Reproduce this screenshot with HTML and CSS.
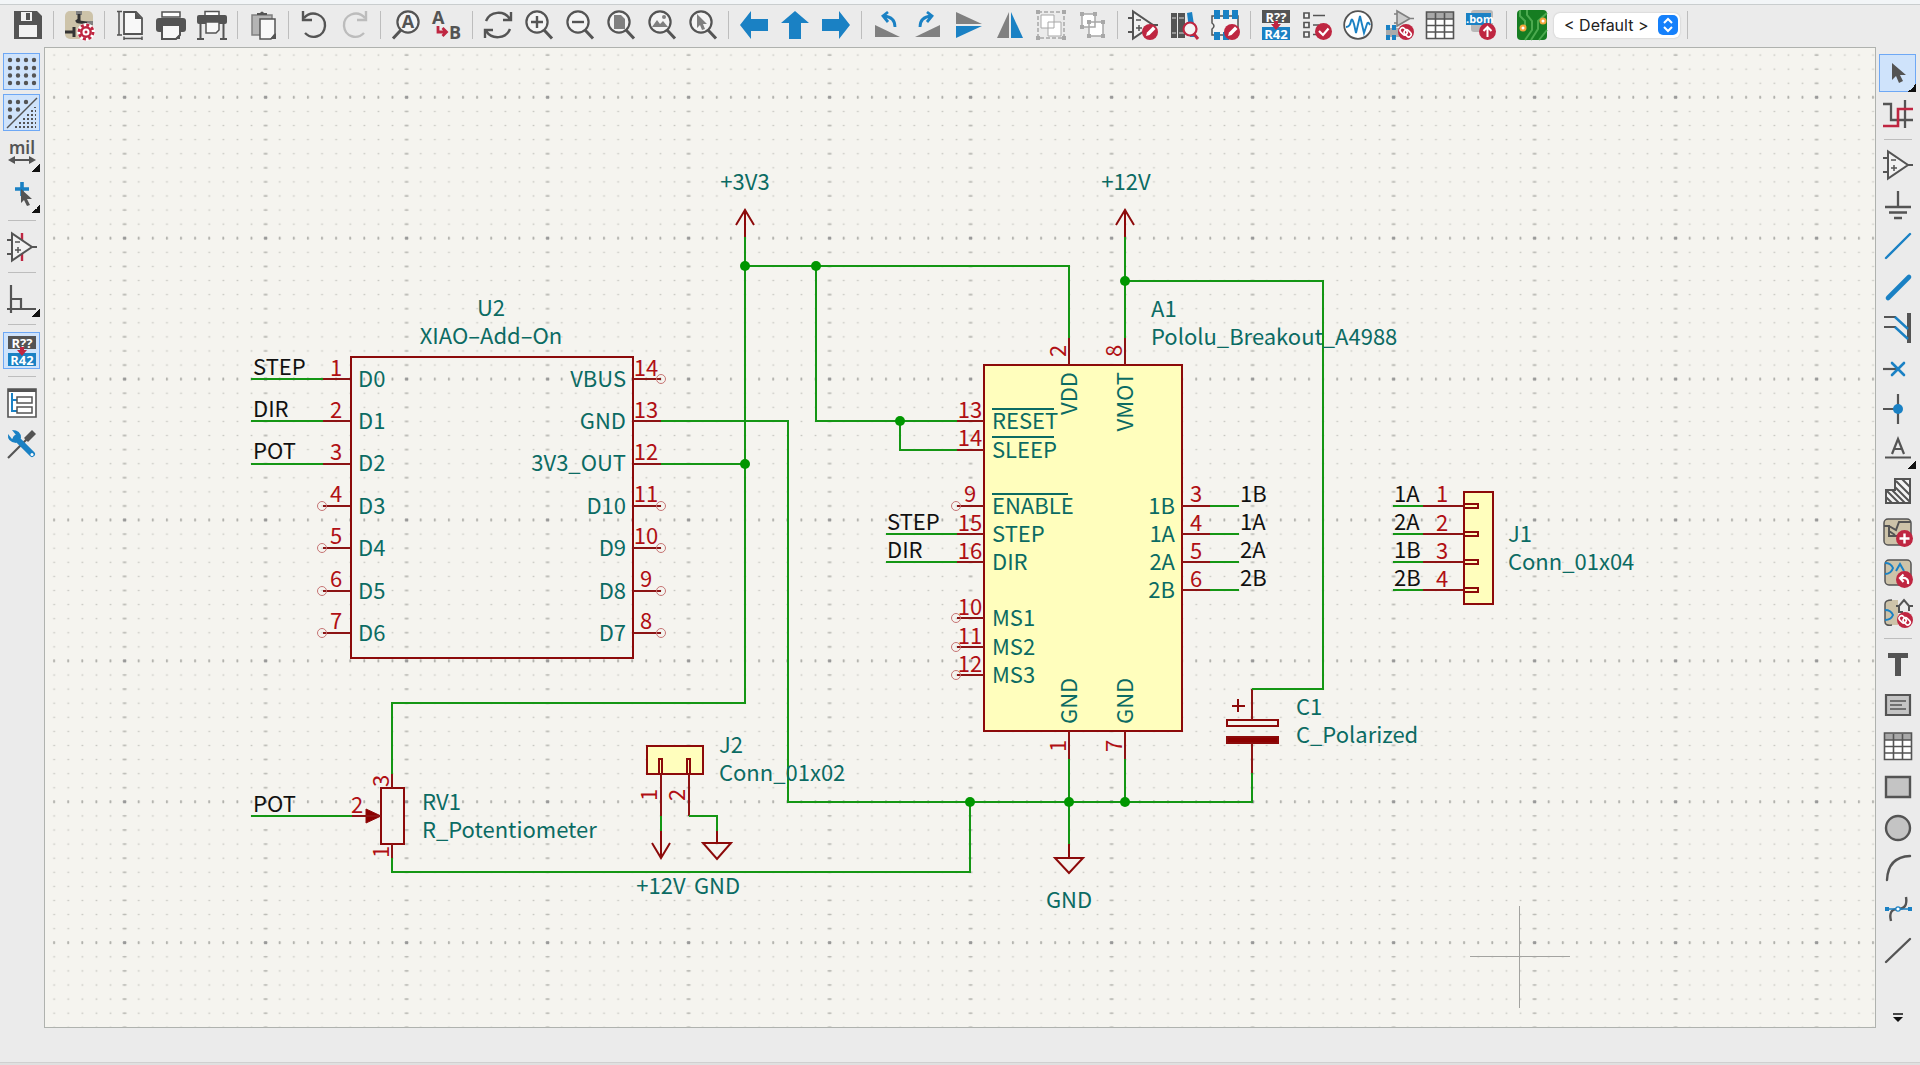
FILE: index.html
```html
<!DOCTYPE html>
<html lang="en">
<head>
<meta charset="utf-8">
<title>Schematic Editor</title>
<link rel="stylesheet" href="styles.css">
</head>
<body>
<svg class="defs" aria-hidden="true">
  <defs>
    <symbol id="lens" viewBox="0 0 30 30"><circle cx="13" cy="12" r="10.6" fill="#f4f4f4" stroke="#545454" stroke-width="2.2"/><path d="M20 20l8 8.500" stroke="#545454" stroke-width="3"/></symbol>
    <symbol id="annotate" viewBox="0 0 30 30"><path fill="#545454" d="M1 0h28v13H1z"/><path fill="#1a81c4" d="M1 17h28v13H1z"/><text x="15" y="12" class="it" text-anchor="middle">R??</text><text x="15" y="29" class="it" text-anchor="middle">R42</text><path fill="#bf2641" d="M13 11h4v3h3l-5 6-5-6h3z"/></symbol>
    <symbol id="amp" viewBox="0 0 30 30"><path d="M5 1.500v27L25 15zM0 8h5M0 22h5M25 15h5" fill="#f2f2f2" stroke="#545454" stroke-width="2"/><path d="M8 10h5M8 18h6M11 15v6" stroke="#545454" stroke-width="1.500"/></symbol>
    <symbol id="pencil" viewBox="0 0 30 30"><circle cx="22" cy="22" r="8" fill="#bf2641"/><path d="M18 26l1-3.500 6-6 2.500 2.500-6 6z" fill="#fff"/></symbol>
    <symbol id="link" viewBox="0 0 30 30"><circle cx="22" cy="22" r="8" fill="#bf2641"/><g fill="none" stroke="#fff" stroke-width="1.600"><rect x="16" y="19" width="8" height="5" rx="2.500" transform="rotate(45 20 21)"/><rect x="20" y="21" width="8" height="5" rx="2.500" transform="rotate(45 24 23)"/></g></symbol>
    <symbol id="table" viewBox="0 0 30 30"><path d="M1 2h28v27H1z" fill="#fff"/><path d="M1 2h28v7H1z" fill="#a8a8a8"/><path d="M1.500 2h27v26.500h-27zM1 9h28M1 15.500h28M1 22h28M10.500 3v26M19.500 3v26" fill="none" stroke="#545454" stroke-width="1.600"/></symbol>
  </defs>
</svg>

<div class="app">
  <div class="titlebar"></div>
  <header class="toolbar" role="toolbar" aria-label="Main toolbar">
    <button aria-label="Save"><svg viewBox="0 0 30 30"><path fill="#545454" d="M1 1h23l5 5v23H1z"/><path fill="#f2f2f2" d="M8 2h11v9H8zM6 15h18v12H6z"/><path fill="#545454" d="M13 3h4v7h-4z"/></svg></button>
    <hr>
    <button aria-label="Schematic setup"><svg viewBox="0 0 30 30"><rect x="1" y="1" width="28" height="28" rx="5" fill="#cdc3a9"/><path fill="#808080" d="M12 1h6v4h-6zM23 11h6v4h-6z"/><path d="M15 4v8l8 1M1 22h9M10 17v10M12 12l4-3" fill="none" stroke="#333" stroke-width="3"/><circle cx="22" cy="22" r="9" fill="#fff"/><circle cx="22" cy="22" r="7" fill="none" stroke="#bf2641" stroke-width="3" stroke-dasharray="3 2.500"/><circle cx="22" cy="22" r="4.700" fill="#fff" stroke="#bf2641" stroke-width="2.400"/><circle cx="22" cy="22" r="1.500" fill="#bf2641"/></svg></button>
    <hr>
    <button aria-label="Page settings"><svg viewBox="0 0 30 30"><path d="M9 2h12l6 6v16H9z" fill="#f8f8f8" stroke="#545454" stroke-width="1.800"/><path d="M20 2v7h7z" fill="#545454"/><path d="M4 2v23M2 1.500h5M2 25h5M9 28.500h18M9 26.500v3.500M27 26.500v3.500" stroke="#545454" stroke-width="1.500"/></svg></button>
    <button aria-label="Print"><svg viewBox="0 0 30 30"><path d="M6 2h18v5H6z" fill="#fff" stroke="#545454" stroke-width="1.500"/><rect y="8" width="30" height="14" rx="3" fill="#545454"/><path d="M6 15h18v10l-4 4H6z" fill="#f8f8f8" stroke="#545454" stroke-width="2"/><path d="M24 24v5h-5z" fill="#545454"/></svg></button>
    <button aria-label="Plot"><svg viewBox="0 0 30 30"><path d="M8 1.500h14V6H8z" fill="#fff" stroke="#545454" stroke-width="1.500"/><rect y="5" width="30" height="9" rx="2" fill="#545454"/><path d="M9 12h13v8l-3 3H9z" fill="#f8f8f8" stroke="#545454" stroke-width="1.500"/><path d="M3.500 14v15M26.500 14v15M0 29h7M23 29h7" stroke="#545454" stroke-width="2"/></svg></button>
    <hr>
    <button aria-label="Paste"><svg viewBox="0 0 30 30"><path d="M4 5h20v20H4z" fill="#b4b4b4" stroke="#808080" stroke-width="1.500"/><path d="M9 5V3h3q2-3 4 0h3v2z" fill="#545454"/><path d="M12 9h15v15l-4 5H12z" fill="#f8f8f8" stroke="#545454" stroke-width="1.500"/><path d="M28 23v6h-6z" fill="#545454"/></svg></button>
    <hr>
    <button aria-label="Undo"><svg viewBox="0 0 30 30"><path d="M5 8C13-1 27 5 26 16c-1 11-13 14-20 7M4 1v9h9" fill="none" stroke="#545454" stroke-width="2.400"/></svg></button>
    <button aria-label="Redo" disabled><svg viewBox="0 0 30 30"><path d="M25 8C17-1 3 5 4 16c1 11 13 14 20 7M26 1v9h-9" fill="none" stroke="#bcbcbc" stroke-width="2.400"/></svg></button>
    <hr>
    <button aria-label="Find"><svg viewBox="0 0 30 30"><g transform="matrix(-1 0 0 1 30 0)"><use href="#lens"/></g><text x="17" y="18" class="it dark" text-anchor="middle">A</text></svg></button>
    <button aria-label="Find and replace"><svg viewBox="0 0 30 30"><text x="0" y="14" class="it dark">A</text><text x="17" y="29" class="it dark">B</text><path d="M6 16v6h8M10.500 18l4 4-4 4" fill="none" stroke="#bf2641" stroke-width="2.800"/></svg></button>
    <hr>
    <button aria-label="Refresh"><svg viewBox="0 0 30 30"><path d="M3 11C7 1 21 0 27 9M28 2v8h-8M27 19c-4 10-18 11-24 2M2 28v-8h8" fill="none" stroke="#545454" stroke-width="2.400"/></svg></button>
    <button aria-label="Zoom in"><svg viewBox="0 0 30 30"><use href="#lens"/><path d="M7 12h12M13 6v12" stroke="#545454" stroke-width="2.400"/></svg></button>
    <button aria-label="Zoom out"><svg viewBox="0 0 30 30"><use href="#lens"/><path d="M7 12h12" stroke="#545454" stroke-width="2.400"/></svg></button>
    <button aria-label="Zoom to page"><svg viewBox="0 0 30 30"><use href="#lens"/><path d="M8 5h7l4 4v10H8z" fill="#808080"/></svg></button>
    <button aria-label="Zoom to objects"><svg viewBox="0 0 30 30"><use href="#lens"/><path d="M5 17l5-7 3 4 3-3 5 6z" fill="#808080"/><circle cx="17" cy="7" r="2" fill="#808080"/></svg></button>
    <button aria-label="Zoom to selection"><svg viewBox="0 0 30 30"><use href="#lens"/><path d="M9 4v14l3-3 2 5 3-1-2-5h4z" fill="#808080"/></svg></button>
    <hr>
    <button aria-label="Back"><svg viewBox="0 0 30 30"><path d="M1 15L12 1v8h17v12H12v8z" fill="#1a81c4"/></svg></button>
    <button aria-label="Up"><svg viewBox="0 0 30 30"><path d="M15 1l14 12h-8v16H9V13H1z" fill="#1a81c4"/></svg></button>
    <button aria-label="Forward"><svg viewBox="0 0 30 30"><path d="M29 15L18 1v8H1v12h17v8z" fill="#1a81c4"/></svg></button>
    <hr>
    <button aria-label="Rotate left"><svg viewBox="0 0 30 30"><path d="M3 15v12h25z" fill="#808080"/><path d="M23 17q0-10-11-11M16 2l-5 4 5 6" fill="none" stroke="#1a81c4" stroke-width="2.800"/></svg></button>
    <button aria-label="Rotate right"><svg viewBox="0 0 30 30"><path d="M27 15v12H2z" fill="#808080"/><path d="M7 17Q7 7 18 6M14 2l5 4-5 6" fill="none" stroke="#1a81c4" stroke-width="2.800"/></svg></button>
    <button aria-label="Mirror vertically"><svg viewBox="0 0 30 30"><path d="M2 2v12h26z" fill="#808080"/><path d="M2 28V16h26z" fill="#1a81c4"/></svg></button>
    <button aria-label="Mirror horizontally"><svg viewBox="0 0 30 30"><path d="M2 28h12V2z" fill="#808080"/><path d="M28 28H16V2z" fill="#1a81c4"/></svg></button>
    <button aria-label="Group" disabled><svg viewBox="0 0 30 30"><path d="M2 2h26v26H2z" fill="none" stroke="#a8a8a8" stroke-dasharray="4 2" stroke-width="1.500"/><path d="M5 5h13v13H5zM12 12h13v14H12z" fill="#fff" stroke="#a8a8a8"/><path d="M0 0h4v4H0zM26 0h4v4h-4zM0 26h4v4H0zM26 26h4v4h-4z" fill="#a8a8a8"/></svg></button>
    <button aria-label="Ungroup" disabled><svg viewBox="0 0 30 30"><path d="M5 4h13v13H5zM12 12h14v14H12z" fill="#fff" stroke="#a8a8a8" stroke-width="1.500"/><path d="M3 2h4v4H3zM16 2h4v4h-4zM3 15h4v4H3zM10 10h4v4h-4zM24 10h4v4h-4zM10 24h4v4h-4zM24 24h4v4h-4z" fill="#a8a8a8"/></svg></button>
    <hr>
    <button aria-label="Symbol editor"><svg viewBox="0 0 30 30"><use href="#amp"/><use href="#pencil"/></svg></button>
    <button aria-label="Browse libraries"><svg viewBox="0 0 30 30"><path d="M2 3h6v25H2zM9 3h7v25H9z" fill="#545454"/><path d="M3 8h4M3 23h4M10 8h5M10 23h5" stroke="#aaa" stroke-width="1.500"/><path d="M18 3l5-1 4 25h-6z" fill="#1a81c4"/><circle cx="21" cy="19" r="6.500" fill="#f4f4f4" stroke="#bf2641" stroke-width="2.200"/><path d="M25 24l4 5" stroke="#bf2641" stroke-width="3"/></svg></button>
    <button aria-label="Footprint editor"><svg viewBox="0 0 30 30"><path d="M2 6h26v19H2v-6q4-3 0-6z" fill="#f2f2f2" stroke="#545454" stroke-width="1.500"/><path d="M4 0h6v9H4zM13 0h6v9h-6zM22 0h6v9h-6zM4 22h6v8H4zM13 22h6v8h-6z" fill="#1a81c4"/><use href="#pencil"/></svg></button>
    <hr>
    <button aria-label="Annotate"><svg viewBox="0 0 30 30"><use href="#annotate"/></svg></button>
    <button aria-label="Electrical rules check"><svg viewBox="0 0 30 30"><path d="M2 3h5v5H2zM2 12.500h5v5H2zM2 22h5v5H2z" fill="#f4f4f4" stroke="#545454" stroke-width="1.700"/><path d="M11 5.500h12M11 15h6M11 24.500h4" stroke="#545454" stroke-width="1.700"/><circle cx="21.500" cy="21.500" r="8.500" fill="#bf2641"/><path d="M17 21l4 4 5.500-6.500" fill="none" stroke="#fff" stroke-width="2.200"/></svg></button>
    <button aria-label="Simulator"><svg viewBox="0 0 30 30"><circle cx="15" cy="15" r="13.800" fill="#fff" stroke="#545454" stroke-width="1.800"/><path d="M3 17q4 0 5-6 1-4 3 3l2 9 4-17 4 17 3-9q1-3 3 1" fill="none" stroke="#1a81c4" stroke-width="1.900"/></svg></button>
    <button aria-label="Assign footprints"><svg viewBox="0 0 30 30"><path d="M13 1v15l13-7.500zM10 4h3M10 13h3M25 8.500h5" fill="#ccc" stroke="#808080" stroke-width="1.600"/><path d="M2 18h16v9H2z" fill="#ababab"/><path d="M2 15h4v5H2zM8 15h4v5H8zM2 25h4v5H2zM8 25h4v5H8z" fill="#1a81c4"/><use href="#link"/></svg></button>
    <button aria-label="Symbol fields table"><svg viewBox="0 0 30 30"><use href="#table"/></svg></button>
    <button aria-label="Generate bill of materials"><svg viewBox="0 0 30 30"><rect x="5" y="0" width="22" height="22" rx="3" fill="#b8b8b8"/><path d="M0 3h25v12H0z" fill="#1a81c4"/><text x="0" y="13" class="it bom">.bom</text><circle cx="21.500" cy="21.500" r="8.500" fill="#bf2641"/><path d="M21.500 27V17M17.500 21l4-4 4 4" fill="none" stroke="#fff" stroke-width="2"/></svg></button>
    <hr>
    <button aria-label="Open PCB editor"><svg viewBox="0 0 30 30"><rect x="0" y="0" width="30" height="30" rx="4" fill="#167d22"/><path d="M3 0v6l5 5v7M10 0v5l5 6v9l-7 10M30 3l-9 8v8l-7 11M30 20l-8 10" fill="none" stroke="#4caa4f" stroke-width="2"/><circle cx="6" cy="18" r="3.500" fill="#f3a43b"/><circle cx="26" cy="11" r="3.500" fill="#f3a43b"/><circle cx="6" cy="18" r="1.500" fill="#fff"/><circle cx="26" cy="11" r="1.500" fill="#fff"/></svg></button>
    <label class="variant"><select aria-label="Design variant"><option>&lt; Default &gt;</option></select><span class="stepper"><svg viewBox="0 0 20 20"><path d="M6 8l4-4 4 4M6 12l4 4 4-4" fill="none" stroke="#fff" stroke-width="2"/></svg></span></label>
    <hr>
  </header>

  <main class="workspace">
    <nav class="side left" aria-label="Display options">
      <button class="on" aria-label="Show grid"><svg viewBox="0 0 30 30"><path d="M3 3h26M3 11h26M3 18.500h26M3 26h26" stroke="#545454" stroke-width="4.400" stroke-linecap="round" stroke-dasharray="0 8"/></svg></button>
      <button class="on" aria-label="Grid overrides"><svg viewBox="0 0 30 30"><path d="M0 30L30 0" stroke="#545454" stroke-width="1.500"/><path d="M3 4h17M3 11.500h9M3 19h1" stroke="#545454" stroke-width="4.400" stroke-linecap="round" stroke-dasharray="0 8"/><path d="M28 9v1M24 13h5M20 17h9M16 21h13M12 25h17M8 29h21" stroke="#545454" stroke-width="2" stroke-dasharray="2 2"/></svg></button>
      <button class="more" aria-label="Units"><svg viewBox="0 0 30 30"><text x="15" y="15" class="unit" text-anchor="middle">mil</text><path d="M4 21h22" stroke="#545454" stroke-width="2"/><path d="M1 21l7-4v8zM29 21l-7-4v8z" fill="#545454"/></svg></button>
      <button class="more" aria-label="Crosshair"><svg viewBox="0 0 30 30"><path d="M15 2v14M8 9h14" stroke="#1a81c4" stroke-width="3.600"/><path d="M14 9v14l3-3 3 6 3-1-3-6h5z" fill="#545454"/></svg></button>
      <hr>
      <button aria-label="Hidden pins"><svg viewBox="0 0 30 30"><path d="M15 1v28" stroke="#bf2641" stroke-width="2.400"/><use href="#amp"/></svg></button>
      <hr>
      <button class="more" aria-label="Line mode"><svg viewBox="0 0 30 30"><path d="M4 1v28M0 25h29M4 15h10v10" fill="none" stroke="#545454" stroke-width="2.200"/></svg></button>
      <hr>
      <button class="on" aria-label="Annotate automatically"><svg viewBox="0 0 30 30"><use href="#annotate"/></svg></button>
      <hr>
      <button aria-label="Hierarchy navigator"><svg viewBox="0 0 30 30"><path d="M1 1h28v28H1z" fill="#fff" stroke="#545454" stroke-width="1.600"/><path d="M1 1h28v3H1z" fill="#545454"/><path d="M5 5v18h5M5 12h5" fill="none" stroke="#1a81c4" stroke-width="2"/><path d="M10 9h15v6H10zM10 19h15v6H10z" fill="#fff" stroke="#545454" stroke-width="1.500"/></svg></button>
      <button aria-label="Properties"><svg viewBox="0 0 30 30"><path d="M1 29L20 10" stroke="#545454" stroke-width="2.200"/><path d="M17 9l8-8 4 4-8 8z" fill="#545454"/><path d="M9 9l16 16" stroke="#1a81c4" stroke-width="6" stroke-linecap="round"/><path d="M1 5q-1 8 8 9l5-5q0-8-9-8l4 5-4 4z" fill="#1a81c4"/><circle cx="25" cy="25.500" r="1.500" fill="#fff"/></svg></button>
    </nav>

    <section class="canvas" aria-label="Schematic sheet">
      <svg class="sheet">
        <defs>
          <pattern id="minor" x="117.600" y="90.300" width="14.100" height="14.090" patternUnits="userSpaceOnUse"><rect x="6.200" y="6.400" width="1.700" height="1.300" fill="#c6c6c0"/></pattern>
          <pattern id="major" x="54.100" y="26.800" width="141" height="140.900" patternUnits="userSpaceOnUse"><path d="M70.500 0v141" stroke="#b9b9b4" stroke-width="4" stroke-dasharray="1.400 12.700" stroke-dashoffset=".7"/><path d="M0 70.500h141" stroke="#b0b0ab" stroke-width="3" stroke-dasharray="1.600 12.500" stroke-dashoffset=".8"/><rect x="69" y="69" width="3" height="3" fill="#999"/></pattern>
        </defs>
        <g transform="translate(-45 -48)">
          <rect x="45" y="48" width="100%" height="100%" fill="url(#minor)"/>
          <rect x="45" y="48" width="100%" height="100%" fill="url(#major)"/>

          <g class="body">
            <rect x="984" y="365" width="198" height="366" class="fill"/>
            <rect x="1464" y="492" width="29" height="112" class="fill"/>
            <rect x="647" y="746" width="56" height="28" class="fill"/>
            <rect x="351" y="357" width="282" height="301"/>
            <rect x="381" y="788" width="23" height="56"/>
            <rect x="1227" y="720" width="51" height="6"/>
            <rect x="1227" y="737" width="51" height="6" class="solid"/>
            <path d="M1232 706h13M1238 699v13"/>
            <path d="M366 809l15 7-15 7z" class="solid thin"/>
            <path d="M1464 504h14v4h-14M1464 532h14v4h-14M1464 560h14v4h-14M1464 588h14v4h-14M659 774v-15h3v15M687 774v-15h3v15"/>
            <path d="M736 225l9-15 9 15M745 210v27M1116 225l9-15 9 15M1125 210v27M652 843l9 15 9-15M661 831v27M717 831v12M703 843h28l-14 16zM1069 844v14M1055 858h28l-14 15z"/>
          </g>
          <path class="pin" d="M323 379h27M323 421h27M323 464h27M323 506h27M323 548h27M323 591h27M323 633h27M633 379h28M633 421h28M633 464h28M633 506h28M633 548h28M633 591h28M633 633h28M957 421h27M957 450h27M957 506h27M957 534h27M957 562h27M957 618h27M957 647h27M957 675h27M1182 506h28M1182 534h28M1182 562h28M1182 590h28M1423 506h40M1423 534h40M1423 562h40M1423 590h40M1069 338v27M1125 338v27M1069 731v28M1125 731v28M1252 689v31M1252 743v30M392 774v14M392 844v14M352 816h29M661 774v42M689 774v42"/>
          <path class="wire" d="M251 379h72M251 421h72M251 464h72M745 237v466H392v71M745 266h324v72M816 266v155h141M900 421v29h57M1125 237v101M1125 281h198v408h-71M661 421h127v381h464v-29M661 464h84M886 534h71M886 562h71M1210 506h29M1210 534h29M1210 562h29M1210 590h29M1393 506h30M1393 534h30M1393 562h30M1393 590h30M1069 759v85M1125 759v43M970 802v70H392v-14M251 816h101M661 816v15M689 816h28v15"/>
          <g class="dot"><circle cx="745" cy="266" r="5"/><circle cx="816" cy="266" r="5"/><circle cx="1125" cy="281" r="5"/><circle cx="900" cy="421" r="5"/><circle cx="745" cy="464" r="5"/><circle cx="970" cy="802" r="5"/><circle cx="1069" cy="802" r="5"/><circle cx="1125" cy="802" r="5"/></g>
          <g class="open"><circle cx="322" cy="506" r="4.500"/><circle cx="322" cy="548" r="4.500"/><circle cx="322" cy="591" r="4.500"/><circle cx="322" cy="633" r="4.500"/><circle cx="661" cy="379" r="4.500"/><circle cx="661" cy="506" r="4.500"/><circle cx="661" cy="548" r="4.500"/><circle cx="661" cy="591" r="4.500"/><circle cx="661" cy="633" r="4.500"/><circle cx="956" cy="506" r="4.500"/><circle cx="956" cy="618" r="4.500"/><circle cx="956" cy="647" r="4.500"/><circle cx="956" cy="675" r="4.500"/></g>

          <g class="label"><text x="253" y="375">STEP</text><text x="253" y="417">DIR</text><text x="253" y="459">POT</text><text x="253" y="812">POT</text><text x="887" y="530">STEP</text><text x="887" y="558">DIR</text><text x="1240" y="502">1B</text><text x="1240" y="530">1A</text><text x="1240" y="558">2A</text><text x="1240" y="586">2B</text><text x="1394" y="502">1A</text><text x="1394" y="530">2A</text><text x="1394" y="558">1B</text><text x="1394" y="586">2B</text></g>

          <g class="num"><text x="336" y="376">1</text><text x="336" y="418">2</text><text x="336" y="460">3</text><text x="336" y="502">4</text><text x="336" y="544">5</text><text x="336" y="587">6</text><text x="336" y="629">7</text><text x="646" y="376">14</text><text x="646" y="418">13</text><text x="646" y="460">12</text><text x="646" y="502">11</text><text x="646" y="544">10</text><text x="646" y="587">9</text><text x="646" y="629">8</text><text x="970" y="418">13</text><text x="970" y="446">14</text><text x="970" y="502">9</text><text x="970" y="531">15</text><text x="970" y="559">16</text><text x="970" y="615">10</text><text x="970" y="644">11</text><text x="970" y="672">12</text><text x="1196" y="502">3</text><text x="1196" y="531">4</text><text x="1196" y="559">5</text><text x="1196" y="587">6</text><text x="1442" y="502">1</text><text x="1442" y="531">2</text><text x="1442" y="559">3</text><text x="1442" y="587">4</text><text x="357" y="813">2</text>
            <text transform="translate(1066 351) rotate(-90)">2</text><text transform="translate(1122 351) rotate(-90)">8</text><text transform="translate(1066 746) rotate(-90)">1</text><text transform="translate(1122 746) rotate(-90)">7</text><text transform="translate(389 781) rotate(-90)">3</text><text transform="translate(389 852) rotate(-90)">1</text><text transform="translate(657 795) rotate(-90)">1</text><text transform="translate(685 795) rotate(-90)">2</text></g>

          <g class="name"><text x="358" y="387">D0</text><text x="358" y="429">D1</text><text x="358" y="471">D2</text><text x="358" y="514">D3</text><text x="358" y="556">D4</text><text x="358" y="599">D5</text><text x="358" y="641">D6</text><text x="992" y="429">RESET</text><text x="992" y="458">SLEEP</text><text x="992" y="514">ENABLE</text><text x="992" y="542">STEP</text><text x="992" y="570">DIR</text><text x="992" y="626">MS1</text><text x="992" y="655">MS2</text><text x="992" y="683">MS3</text><text transform="translate(1077 724) rotate(-90)">GND</text><text transform="translate(1133 724) rotate(-90)">GND</text>
            <text x="1151" y="317">A1</text><text x="1151" y="345">Pololu_Breakout_A4988</text><text x="1508" y="542">J1</text><text x="1508" y="570">Conn_01x04</text><text x="1296" y="715">C1</text><text x="1296" y="743">C_Polarized</text><text x="422" y="810">RV1</text><text x="422" y="838">R_Potentiometer</text><text x="719" y="753">J2</text><text x="719" y="781">Conn_01x02</text></g>
          <g class="name end"><text x="626" y="387">VBUS</text><text x="626" y="429">GND</text><text x="626" y="471">3V3_OUT</text><text x="626" y="514">D10</text><text x="626" y="556">D9</text><text x="626" y="599">D8</text><text x="626" y="641">D7</text><text x="1175" y="514">1B</text><text x="1175" y="542">1A</text><text x="1175" y="570">2A</text><text x="1175" y="598">2B</text><text transform="translate(1077 372) rotate(-90)">VDD</text><text transform="translate(1133 372) rotate(-90)">VMOT</text></g>
          <g class="name mid"><text x="491" y="316">U2</text><text x="491" y="344">XIAO–Add–On</text><text x="745" y="190">+3V3</text><text x="1126" y="190">+12V</text><text x="661" y="894">+12V</text><text x="717" y="894">GND</text><text x="1069" y="908">GND</text></g>
          <path class="bar" d="M992 409h62M992 437h62M992 494h76"/>
          <path class="cursor" d="M1470 956.500h100M1519.500 906v102"/>
        </g>
      </svg>
    </section>

    <nav class="side right" aria-label="Drawing tools">
      <div class="tools">
      <button class="on more" aria-label="Select"><svg viewBox="0 0 30 30"><path d="M9 5v17l4-4 3 7 4-2-3-6h6z" fill="#545454"/></svg></button>
      <button aria-label="Highlight net"><svg viewBox="0 0 30 30"><path d="M0 5h8v16h14M22 1v28M14 21h16" fill="none" stroke="#545454" stroke-width="2.300"/><path d="M0 27h15V10h15" fill="none" stroke="#bf2641" stroke-width="2.600"/></svg></button>
      <hr>
      <button aria-label="Place symbol"><svg viewBox="0 0 30 30"><use href="#amp"/></svg></button>
      <button aria-label="Place power"><svg viewBox="0 0 30 30"><path d="M15 1v16M2 17h26M6 22.500h18M11 28h8" stroke="#545454" stroke-width="2.300"/></svg></button>
      <button aria-label="Draw wire"><svg viewBox="0 0 30 30"><path d="M3 27L27 3" stroke="#1a81c4" stroke-width="2.400" stroke-linecap="round"/></svg></button>
      <button aria-label="Draw bus"><svg viewBox="0 0 30 30"><path d="M5 26L26 5" stroke="#1a81c4" stroke-width="4.600" stroke-linecap="round"/></svg></button>
      <button aria-label="Bus entry"><svg viewBox="0 0 30 30"><path d="M26 0v30" stroke="#545454" stroke-width="4"/><path d="M1 4h12M1 14h12" stroke="#545454" stroke-width="2.200"/><path d="M12 4l13 12M12 14l13 12" stroke="#1a81c4" stroke-width="2.400"/></svg></button>
      <button aria-label="No connect"><svg viewBox="0 0 30 30"><path d="M0 15h15" stroke="#545454" stroke-width="2.200"/><path d="M9 9l12 12M21 9L9 21" stroke="#1a81c4" stroke-width="2.600" stroke-linecap="round"/></svg></button>
      <button aria-label="Junction"><svg viewBox="0 0 30 30"><path d="M0 15h15M15 0v30" stroke="#545454" stroke-width="2.200"/><circle cx="15" cy="15" r="5" fill="#1a81c4"/></svg></button>
      <button class="more" aria-label="Label"><svg viewBox="0 0 30 30"><path d="M9 19L15 4l6 15M11 14h8M2 22.500h26" fill="none" stroke="#545454" stroke-width="2.200"/></svg></button>
      <button aria-label="Rule area"><svg viewBox="0 0 30 30"><path d="M3 14h9V3h15v24H3z" fill="#f4f4f4"/><path d="M13 5l14 14M19 3l8 8M12 11l15 15M9 14l13 13M3 14l13 13M3 21l6 6" stroke="#545454" stroke-width="2"/><path d="M3 14h9V3h15v24H3z" fill="none" stroke="#545454" stroke-width="2"/></svg></button>
      <button aria-label="Hierarchical sheet"><svg viewBox="0 0 30 30"><rect x="1" y="2" width="27" height="26" rx="4" fill="#cdc3a9" stroke="#545454" stroke-width="1.500"/><path d="M1 9h5v10h9M6 9l7 4 3-8h12M6 14l6 4" fill="none" stroke="#545454" stroke-width="2"/><circle cx="21.500" cy="21.500" r="8.500" fill="#bf2641"/><path d="M21.500 16.500v10M16.500 21.500h10" stroke="#fff" stroke-width="2.400"/></svg></button>
      <button aria-label="Import sheet"><svg viewBox="0 0 30 30"><rect x="2" y="2" width="26" height="25" rx="4" fill="#cdc3a9" stroke="#545454" stroke-width="1.500"/><path d="M2 5q6 0 8 5-2 6-8 6M13 13l4-7 4 7" fill="none" stroke="#1a81c4" stroke-width="2"/><circle cx="21.500" cy="21.500" r="8.500" fill="#bf2641"/><path d="M25 26q1-7-7-6M20.500 16.500l-3.500 3.500 3.500 4" fill="none" stroke="#fff" stroke-width="2.200"/></svg></button>
      <button aria-label="Sync sheet pins"><svg viewBox="0 0 30 30"><path d="M8 2q-6 0-6 4v18q0 4 6 3h7V2z" fill="#cdc3a9"/><path d="M9 2q-7 0-7 4v18q0 4 7 3" fill="none" stroke="#545454" stroke-width="1.500"/><path d="M2 12q6 0 8 5-2 5-8 5" fill="none" stroke="#1a81c4" stroke-width="2"/><path d="M13 8h3l5-6 5 6h4M20 14h-4V8M26 8v5" fill="none" stroke="#545454" stroke-width="2"/><use href="#link"/></svg></button>
      <hr>
      <button aria-label="Text"><svg viewBox="0 0 30 30"><path d="M5 4h20v5h-7v18h-6V9H5z" fill="#545454"/></svg></button>
      <button aria-label="Text box"><svg viewBox="0 0 30 30"><path d="M3 5h24v20H3z" fill="#c4c4c4" stroke="#545454" stroke-width="2.200"/><path d="M7 11h16M7 15h12M7 19h16" stroke="#545454" stroke-width="1.700"/></svg></button>
      <button aria-label="Table"><svg viewBox="0 0 30 30"><use href="#table"/></svg></button>
      <button aria-label="Rectangle"><svg viewBox="0 0 30 30"><path d="M3 5h24v20H3z" fill="#c4c4c4" stroke="#545454" stroke-width="2.400"/></svg></button>
      <button aria-label="Circle"><svg viewBox="0 0 30 30"><circle cx="15" cy="15" r="12" fill="#c4c4c4" stroke="#545454" stroke-width="2.400"/></svg></button>
      <button aria-label="Arc"><svg viewBox="0 0 30 30"><path d="M4 27Q5 4 27 3" fill="none" stroke="#545454" stroke-width="2.400" stroke-linecap="round"/></svg></button>
      <button aria-label="Bezier curve"><svg viewBox="0 0 30 30"><path d="M8 27q-3-12 7-12t8-12" fill="none" stroke="#545454" stroke-width="2.400"/><path d="M4 15h22" stroke="#1a81c4" stroke-width="1.500"/><path d="M2 13h4v4H2zM25 13h4v4h-4z" fill="#1a81c4"/><circle cx="15" cy="15" r="2.200" fill="#fff" stroke="#1a81c4" stroke-width="1.200"/></svg></button>
      <button aria-label="Line"><svg viewBox="0 0 30 30"><path d="M3 27L27 4" stroke="#545454" stroke-width="2.400" stroke-linecap="round"/></svg></button>
      </div>
      <button class="overflow" aria-label="More tools"><svg viewBox="0 0 12 12"><path d="M1 2h10" stroke="#111" stroke-width="1.500"/><path d="M1 5h10l-5 5z" fill="#111"/></svg></button>
    </nav>
  </main>
  <footer class="status"></footer>
</div>
</body>
</html>
```
FILE: styles.css
```css
* { box-sizing: border-box; }

body {
  margin: 0;
  background: #ebebeb;
  font-family: Inter, "Liberation Sans", sans-serif;
}

button {
  display: flex;
  align-items: center;
  justify-content: center;
  position: relative;
  flex: none;
  width: 37px;
  height: 37px;
  padding: 0;
  border: 1px solid transparent;
  background: none;
}

button svg {
  flex: none;
  width: 30px;
  height: 30px;
  overflow: visible;
}

hr {
  flex: none;
  margin: 0;
  border: 0;
}

.defs {
  position: absolute;
  width: 0;
  height: 0;
}

.defs symbol { overflow: visible; }

.app {
  display: flex;
  flex-direction: column;
  min-height: 100vh;
}

.titlebar {
  height: 5px;
  background: #f2f5f7;
  border-bottom: 1px solid #c9cdce;
}

.toolbar {
  display: flex;
  align-items: center;
  gap: 4px;
  height: 42px;
  padding: 0 9px 2px;
}

.toolbar hr {
  width: 6px;
  height: 28px;
  background: linear-gradient(#bdbdbd, #bdbdbd) center / 1px 100% no-repeat;
}

.variant {
  display: flex;
  align-items: center;
  position: relative;
}

.variant select {
  width: 126px;
  height: 25px;
  padding: 0 10px;
  appearance: none;
  border: 0;
  border-radius: 6px;
  background: #fff;
  box-shadow: 0 0 2px #bbb;
  font: 16px Inter, "Liberation Sans", sans-serif;
  color: #222;
}

.stepper {
  position: absolute;
  right: 2px;
  width: 20px;
  height: 20px;
  border-radius: 5px;
  background: #1580fb;
  pointer-events: none;
}

.stepper svg { display: block; }

.workspace {
  display: flex;
  flex: 1;
}

.side {
  display: flex;
  flex-direction: column;
  width: 44px;
  padding: 6px 3px 0;
}

.left { gap: 4px; }

.right { padding: 7px 4px 0 3px; }

.tools {
  display: flex;
  flex: 1;
  flex-direction: column;
  gap: 3px;
}

.tools button {
  flex: 1 1 37px;
  height: auto;
}

.side hr {
  width: 28px;
  height: 7px;
  margin-left: 5px;
  background: linear-gradient(#bdbdbd, #bdbdbd) center / 100% 1px no-repeat;
}

.on {
  border-color: #6ea8f5;
  background: #cfe3fb;
}

.more::after {
  content: "";
  position: absolute;
  right: -1px;
  bottom: -1px;
  width: 8px;
  height: 8px;
  background: linear-gradient(135deg, transparent 50%, #111 50%);
}

.overflow {
  height: 20px;
  margin: 39px 0 0;
}

.overflow svg {
  width: 12px;
  height: 12px;
}

.canvas {
  flex: 1;
  display: flex;
  border: 1px solid #afb2ae;
  background: #f5f4ef;
}

.sheet {
  flex: 1;
  width: 100%;
  min-height: 880px;
}

.status {
  height: 37px;
  border-bottom: 2px solid #e0e0e0;
  background: linear-gradient(#d0d0d0, #d0d0d0) 0 34px / 100% 1px no-repeat;
}

.body { fill: none; stroke: #8c0a0a; stroke-width: 2; }
.body .fill { fill: #fffebd; }
.body .solid { fill: #8c0000; }
.body .thin { stroke-width: 1; }
.pin { fill: none; stroke: #8c1414; stroke-width: 2; }
.wire { fill: none; stroke: #149614; stroke-width: 2; }
.dot { fill: #009600; }
.open { fill: none; stroke: #c67474; stroke-width: 1; }
.bar { fill: none; stroke: #0b6b63; stroke-width: 2; }
.cursor { fill: none; stroke: #a3a3a0; stroke-width: 1; }

.label, .num, .name {
  font: 22px "Noto Sans CJK JP", "Noto Sans", sans-serif;
}

.label { fill: #111; }
.num { fill: #b00f14; text-anchor: middle; }
.name { fill: #0b6b63; }
.end { text-anchor: end; }
.mid { text-anchor: middle; }

.it {
  font: bold 13px "Open Sans", "Noto Sans", sans-serif;
  fill: #fff;
}

.it.dark { fill: #545454; font-size: 18px; }
.it.bom { font-size: 11px; }
.unit { font: 600 17px "Noto Sans", sans-serif; fill: #545454; }
```
